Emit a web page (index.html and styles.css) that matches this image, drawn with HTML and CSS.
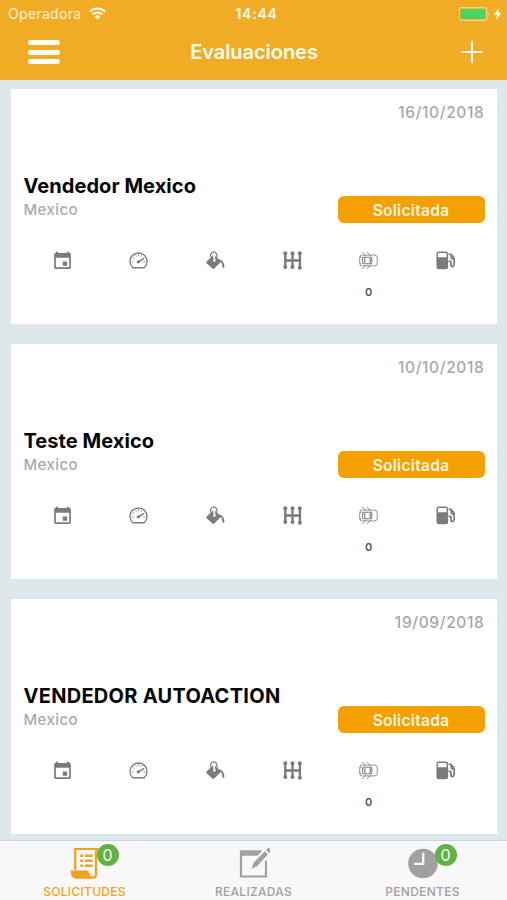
FILE: index.html
```html
<!DOCTYPE html>
<html lang="es">
<head>
<meta charset="utf-8">
<title>Evaluaciones</title>
<link rel="stylesheet" href="styles.css">
</head>
<body>
<svg class="sprite" aria-hidden="true">
  <symbol id="calendar" viewBox="0 0 20 20">
    <path fill="currentColor" fill-rule="evenodd" d="M3 2.200V.7h2.400v1.500h9.200V.7H17v1.500h.3a1.500 1.500 0 0 1 1.500 1.500v13.700a1.500 1.500 0 0 1-1.500 1.500H2.700a1.500 1.500 0 0 1-1.500-1.500V3.700a1.500 1.500 0 0 1 1.500-1.500zM3 7v10h14V7zM10.300 11h4.600v4.500h-4.600z"/>
  </symbol>
  <symbol id="gauge" viewBox="0 0 20 20">
    <path fill="none" stroke="currentColor" stroke-width="1.400" stroke-linejoin="round" d="M4 17.600A9 8.900 0 1 1 16 17.600z"/>
    <path fill="none" stroke="currentColor" stroke-width="1" d="M3 11.500h1.700M4.300 7l1.300.8M7 4.400l.7 1.400M10 3.400v1.700M13 4.400l-.7 1.400M17 11.500h-1.700"/>
    <path fill="none" stroke="currentColor" stroke-width="1.500" d="M9.800 11.400 16 7.800"/>
    <circle cx="9.800" cy="11.400" r="1.700" fill="currentColor"/>
  </symbol>
  <symbol id="paint" viewBox="0 0 20 20">
    <path fill="currentColor" d="M.4 11.400 7.300 4.500l.8 4.500a1.300 1.300 0 1 0 1.800.3L9.300 4.700l6.600 6.600-7.500 7.400a1 1 0 0 1-1.400 0L.4 12.500a.8.8 0 0 1 0-1.100z"/>
    <path fill="none" stroke="currentColor" stroke-width="1.300" d="M4.800 6.200C4 1.200 8.400.3 10 1.500s1.800 3 1.600 5.400"/>
    <path fill="currentColor" d="M13.300 8.800c3.600.3 5.800 3.400 6.100 7.600.1 2-2.100 2-2.200 0-.2-3.300-.8-4.500-2.200-5.200z"/>
  </symbol>
  <symbol id="gearbox" viewBox="0 0 20 20">
    <path fill="none" stroke="currentColor" stroke-width="2.500" d="M2.400 2.500v15M10 2.500v15M17.800 2.500v15M2.400 10h15.400"/>
    <g fill="currentColor"><circle cx="2.400" cy="2.400" r="2.100"/><circle cx="10" cy="2.400" r="2.100"/><circle cx="17.700" cy="2.400" r="2.100"/><circle cx="2.400" cy="16.800" r="2.100"/><circle cx="10" cy="16.800" r="2.100"/><circle cx="17.700" cy="17.700" r="2.100"/></g>
  </symbol>
  <symbol id="doors" viewBox="0 0 20 20">
    <g fill="none" stroke="currentColor" stroke-width=".9">
      <rect x=".8" y="4.300" width="18.400" height="11.400" rx="2.800"/>
      <path d="M3.200 1l4.300 4.100M8.200 1l4.200 4.100M3.200 19l4.300-4.100M8.200 19l4.200-4.100M.8 6.700h1.600M.8 13.300h1.600"/>
    </g>
    <path fill="none" stroke="currentColor" stroke-width="1.200" d="M4.300 6.600q-1.400 3.400 0 6.800h8.700q1.400-3.400 0-6.800zM6.300 7.500q-.8 2.500 0 5M11.500 7.500q.8 2.500 0 5"/>
  </symbol>
  <symbol id="fuel" viewBox="0 0 20 20">
    <path fill="currentColor" fill-rule="evenodd" d="M2.800.6h7.700a2.300 2.300 0 0 1 2.300 2.300v14a2.300 2.300 0 0 1-2.300 2.300H2.800a2.300 2.300 0 0 1-2.300-2.300v-14A2.300 2.300 0 0 1 2.800.6zM3 2a1 1 0 0 0-1 1v3.700h9.200V3a1 1 0 0 0-1-1z"/>
    <path fill="none" stroke="currentColor" stroke-width="1.800" d="M13.300 3.400h2.400l3 3.300q1 4.100.1 8.200c-.5 2.200-3 2-3 0v-2.700q0-1.500-2.500-1.500M16 4v3.300l3 2"/>
  </symbol>
</svg>
<div class="screen">
  <header class="top">
    <div class="status">
      <div class="carrier"><span>Operadora</span>
        <svg class="wifi" viewBox="0 0 17 13"><g fill="none" stroke="currentColor" stroke-width="2.100"><path d="M.9 4.700a10.800 10.800 0 0 1 15.200 0"/><path d="M3.600 7.500a7 7 0 0 1 9.800 0"/></g><path fill="currentColor" d="M5.700 9.600a4 4 0 0 1 5.600 0L8.500 12.500z"/></svg>
      </div>
      <div class="clock">14:44</div>
      <svg class="battery" viewBox="0 0 44 14"><rect x=".2" y=".7" width="27.600" height="12.600" rx="2.500" fill="none" stroke="#f9d488" stroke-width="1.200"/><rect x="1.500" y="2" width="25" height="10" rx=".8" fill="#4cd562"/><path d="M29.500 5.300q2 1.700 0 3.400z" fill="#f9d488"/><path d="M40 1 34.800 7.800h3.400l-1.300 5.400 5.600-7.500h-3.500z" fill="#fffdf0"/></svg>
    </div>
    <div class="nav">
      <div class="menu"><i></i><i></i><i></i></div>
      <h1>Evaluaciones</h1>
      <svg class="plus" viewBox="0 0 22 22"><path d="M11 .5v21M.5 11h21" stroke="currentColor" stroke-width="2.200"/></svg>
    </div>
  </header>
  <main class="list">
    <article class="card">
      <time>16/10/2018</time>
      <h2>Vendedor Mexico</h2>
      <div class="row"><span class="place">Mexico</span><span class="state">Solicitada</span></div>
      <div class="specs"><svg><use href="#calendar"/></svg><svg><use href="#gauge"/></svg><svg><use href="#paint"/></svg><svg><use href="#gearbox"/></svg><div><svg><use href="#doors"/></svg><b>0</b></div><svg><use href="#fuel"/></svg></div>
    </article>
    <article class="card">
      <time>10/10/2018</time>
      <h2>Teste Mexico</h2>
      <div class="row"><span class="place">Mexico</span><span class="state">Solicitada</span></div>
      <div class="specs"><svg><use href="#calendar"/></svg><svg><use href="#gauge"/></svg><svg><use href="#paint"/></svg><svg><use href="#gearbox"/></svg><div><svg><use href="#doors"/></svg><b>0</b></div><svg><use href="#fuel"/></svg></div>
    </article>
    <article class="card">
      <time>19/09/2018</time>
      <h2 class="caps">VENDEDOR AUTOACTION</h2>
      <div class="row"><span class="place">Mexico</span><span class="state">Solicitada</span></div>
      <div class="specs"><svg><use href="#calendar"/></svg><svg><use href="#gauge"/></svg><svg><use href="#paint"/></svg><svg><use href="#gearbox"/></svg><div><svg><use href="#doors"/></svg><b>0</b></div><svg><use href="#fuel"/></svg></div>
    </article>
  </main>
  <nav class="tabs">
    <a class="tab active">
      <span class="glyph"><svg viewBox="0 0 32 32"><g fill="none" stroke="currentColor" stroke-width="2.200"><path d="M6.200 23V2h23.300"/><path d="M29.500 2Q27 2.500 27 6v21.500q0 3.200-3.500 3.200t-3.500-4.500"/></g><path fill="currentColor" d="M1.500 23.500h18q-.5 4.500 3.500 8.200H7q-5.500-.7-5.500-8.200zM11.300 7.500h3V10h-3zM16 7.500h7.500V10H16zM11.300 12.500h3V15h-3zM16 12.500h7.500V15H16zM11.300 17.500h3V20h-3zM16 17.500h7.500V20H16z"/></svg><em>0</em></span>
      <span class="label">SOLICITUDES</span>
    </a>
    <a class="tab">
      <span class="glyph"><svg viewBox="0 0 32 32"><path fill="none" stroke="currentColor" stroke-width="2.200" d="M23 4.500H3v25h25V13.500"/><path fill="currentColor" d="M2 3.400h22.500l-5 5.300H2z"/><path fill="#f8f8f8" d="M12 23l2.500-8L27.500 1l5.500 5-14 15z"/><path fill="currentColor" d="m13.500 21.800 2-6L26.800 4.300l3.100 3.100-10.900 11.800zM28 3.100l1.600-1.600q.8-.8 1.600 0l1.500 1.500q.8.8 0 1.600l-1.600 1.600z"/></svg></span>
      <span class="label">REALIZADAS</span>
    </a>
    <a class="tab">
      <span class="glyph"><svg viewBox="0 0 32 32"><circle cx="16" cy="16.500" r="14.800" fill="currentColor"/><path d="M16.200 5.500v11.300H7" fill="none" stroke="#f8f8f8" stroke-width="2.300"/></svg><em>0</em></span>
      <span class="label">PENDENTES</span>
    </a>
  </nav>
</div>
</body>
</html>
```

FILE: styles.css
```css
* { box-sizing: border-box; }
body { margin: 0; font-family: Inter, "Liberation Sans", sans-serif; }
.sprite { position: absolute; width: 0; height: 0; }
.screen { width: 507px; height: 900px; display: flex; flex-direction: column; background: #dee7e9; overflow: hidden; }
.top { height: 79.500px; flex: none; background: #f1ac26; color: #fffdf0; border-bottom: 1px solid #dfae4e; }
.status { height: 27px; padding: 0 4px 0 8px; display: grid; grid-template-columns: 1fr auto 1fr; align-items: center; }
.carrier { display: flex; align-items: center; gap: 8px; font-size: 14px; letter-spacing: .3px; color: #fff2d2; }
.wifi { width: 17px; height: 13px; color: #fffdf0; }
.clock { font-size: 14px; font-weight: 600; letter-spacing: .75px; padding-left: 2px; }
.battery { width: 44px; height: 14px; justify-self: end; }
.nav { height: 50px; padding: 0 24px 0 28px; display: grid; grid-template-columns: 1fr auto 1fr; align-items: center; }
.menu { display: grid; gap: 4.300px; width: 32px; }
.menu i { height: 5px; border-radius: 2.500px; background: #fffdf5; }
h1 { margin: 0 3px 0 0; font-size: 20px; line-height: 24px; font-weight: 600; letter-spacing: -.05px; }
.plus { width: 22px; height: 22px; justify-self: end; }
.list { padding: 9px 10px 0 10.500px; flex: 1; min-height: 0; display: flex; flex-direction: column; gap: 19.500px; overflow: hidden; }
.card { height: 235.500px; flex: none; background: #fff; border-radius: 1px; padding: 14px 12.500px 0 13px; display: flex; flex-direction: column; }
time { align-self: flex-end; font-size: 15.500px; line-height: 20px; font-weight: 500; letter-spacing: .65px; color: #a6a6a6; }
h2 { margin: 50px 0 0; font-size: 20px; line-height: 26px; font-weight: 700; letter-spacing: .06px; color: #050505; white-space: nowrap; align-self: flex-start; }
.caps { letter-spacing: .28px; }
.row { display: flex; justify-content: space-between; margin-top: -3px; }
.place { font-size: 15px; line-height: 28px; font-weight: 500; color: #aaa; letter-spacing: .4px; }
.state { width: 147px; height: 27px; border-radius: 6px; background: #f4a000; color: #fff7e0; font-size: 15.500px; line-height: 29px; font-weight: 600; text-align: center; letter-spacing: .3px; }
.specs { display: grid; grid-template-columns: repeat(6, 1fr); justify-items: center; margin: 27px 1px 0 .5px; color: #7b7b7b; }
.specs svg { width: 19px; height: 19px; display: block; }
.specs b { display: block; text-align: center; font-size: 11px; line-height: 14px; font-weight: 600; color: #555; margin-top: 15px; }
.tabs { height: 60px; flex: none; display: grid; grid-template-columns: repeat(3, 1fr); background: #f8f8f8; border-top: 1px solid #cbd4d6; }
.tab { display: flex; flex-direction: column; align-items: center; color: #a0a0a0; }
.glyph { position: relative; height: 32px; margin-top: 6px; }
.glyph svg { width: 32px; height: 32px; display: block; }
.glyph em { position: absolute; left: 28px; top: -3px; width: 22px; height: 22px; border-radius: 50%; background: #61b146; color: #f4fff0; font-style: normal; font-size: 16px; line-height: 22px; text-align: center; }
.label { font-size: 12px; line-height: 16px; font-weight: 500; margin-top: 5px; letter-spacing: .3px; }
.active { color: #f1a21c; }
```
